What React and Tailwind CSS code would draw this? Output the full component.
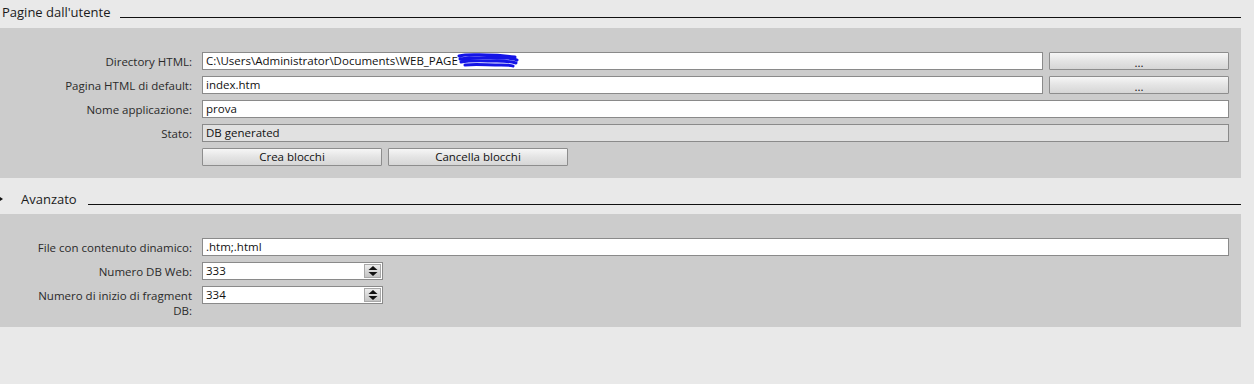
import React from "react";

const font = "font-['Open_Sans','Noto_Sans',sans-serif]";

function Label({ children }) {
  return (
    <div className="w-[202px] shrink-0 pl-[30px] pr-[10px] text-right leading-[15px] text-[#2a2a2a]">
      {children}
    </div>
  );
}

function TextBox({ children, disabled, className = "" }) {
  return (
    <div
      className={`h-[18px] border border-[#8a8a8a] ${disabled ? "bg-[#e1e1e1]" : "bg-white"} pl-[3px] flex items-center text-[#111] leading-none ${className}`}
    >
      {children}
    </div>
  );
}

function Button({ children, className = "" }) {
  return (
    <div
      className={`h-[18px] border border-[#8d8d8d] rounded-[1px] bg-[linear-gradient(#f6f6f6,#e4e4e4_50%,#d6d6d6)] flex items-center justify-center text-[#111] leading-none ${className}`}
    >
      {children}
    </div>
  );
}

function Spin({ value }) {
  return (
    <div className="h-[18px] w-[181px] border border-[#8a8a8a] bg-white flex items-stretch">
      <div className="flex-1 pl-[3px] flex items-center leading-none text-[#111]">{value}</div>
      <div className="w-[17px] m-[1px] bg-[linear-gradient(#ececec,#c4c4c4)] border border-[#a8a8a8] flex items-center justify-center">
        <svg width="10" height="12" viewBox="0 0 10 12">
          <path d="M5 1 L9.5 5 L0.5 5 Z" fill="#111" />
          <path d="M0.5 7 L9.5 7 L5 11 Z" fill="#111" />
        </svg>
      </div>
    </div>
  );
}

function Scribble() {
  return (
    <svg width="62" height="16" viewBox="0 0 62 16" className="-ml-[1px] -mt-[1px]">
      <path
        d="M2 3 C10 1 20 2 30 2 C40 2 50 3 58 4 M3 6 C15 4 30 5 45 5 C52 5 58 6 60 7 M4 9 C14 7 28 8 40 8 C48 8 55 9 59 10 M8 12 C18 11 30 12 44 12 C50 12 54 12 56 13"
        stroke="#1414e6"
        strokeWidth="3"
        fill="none"
        strokeLinecap="round"
      />
    </svg>
  );
}

export default function App() {
  return (
    <div className={`w-[1254px] h-[384px] bg-[#e9e9e9] text-[11.5px] ${font} overflow-hidden`}>
      <div className="w-[1241px]">
        {/* Header 1 */}
        <div className="h-[28px] flex items-start pt-[3px]">
          <div className="pl-[2px] pr-[10px] text-[13px] leading-[18px] text-[#1a1a1a]">Pagine dall'utente</div>
          <div className="flex-1 mt-[14px] border-b border-[#111]" />
        </div>

        {/* Panel 1 */}
        <div className="bg-[#cccccc] h-[150px] pt-[24px] flex flex-col gap-[6px]">
          <div className="flex items-center">
            <Label>Directory HTML:</Label>
            <TextBox className="w-[841px]">
              <span>C:\Users\Administrator\Documents\WEB_PAGE</span>
              <Scribble />
            </TextBox>
            <Button className="ml-[6px] w-[180px]"><span className="mt-[3px]">...</span></Button>
          </div>
          <div className="flex items-center">
            <Label>Pagina HTML di default:</Label>
            <TextBox className="w-[841px]">index.htm</TextBox>
            <Button className="ml-[6px] w-[180px]"><span className="mt-[3px]">...</span></Button>
          </div>
          <div className="flex items-center">
            <Label>Nome applicazione:</Label>
            <TextBox className="w-[1027px]">prova</TextBox>
          </div>
          <div className="flex items-center">
            <Label>Stato:</Label>
            <TextBox disabled className="w-[1027px]">DB generated</TextBox>
          </div>
          <div className="flex items-center">
            <div className="w-[202px] shrink-0" />
            <Button className="w-[180px]">Crea blocchi</Button>
            <Button className="ml-[6px] w-[180px]">Cancella blocchi</Button>
          </div>
        </div>

        {/* Header 2 */}
        <div className="h-[36px] flex items-start pt-[12px]">
          <svg width="6" height="8" viewBox="0 0 6 8" className="mt-[5px] -ml-[2px]">
            <path d="M0 0.5 L5 4 L0 7.5 Z" fill="#111" />
          </svg>
          <div className="pl-[17px] pr-[11px] text-[13px] leading-[18px] text-[#1a1a1a]">Avanzato</div>
          <div className="flex-1 mt-[14px] border-b border-[#111]" />
        </div>

        {/* Panel 2 */}
        <div className="bg-[#cccccc] h-[113px] pt-[24px] flex flex-col gap-[6px]">
          <div className="flex items-center">
            <Label>File con contenuto dinamico:</Label>
            <TextBox className="w-[1027px]">.htm;.html</TextBox>
          </div>
          <div className="flex items-center">
            <Label>Numero DB Web:</Label>
            <Spin value="333" />
          </div>
          <div className="flex items-start">
            <Label>
              <div className="pt-[2px]">Numero di inizio di fragment DB:</div>
            </Label>
            <Spin value="334" />
          </div>
        </div>
      </div>
    </div>
  );
}
